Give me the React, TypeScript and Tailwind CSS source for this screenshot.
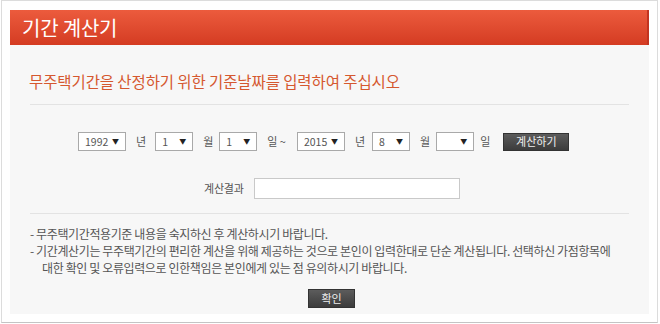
const font = { fontFamily: '"Noto Sans CJK KR", "Noto Sans", sans-serif' };

function FakeSelect({ value, w }: { value: string; w: string }) {
  return (
    <div
      className={`${w} h-[19px] bg-white border border-[#a9a9a9] flex items-center justify-between pl-[6px] pr-[6px] text-[10.5px] text-[#555]`}
    >
      <span>{value}</span>
      <span className="text-[7px] text-[#222]">▼</span>
    </div>
  );
}

export default function App() {
  return (
    <div className="w-[660px] h-[324px] bg-white" style={font}>
      <div className="ml-[1px] w-[657px] h-[323px] border border-[#dcdcdc] border-b-[#c4c4c4] pl-[8px] pt-[9px]">
        <div className="w-[639px] h-[35px] bg-gradient-to-b from-[#ec5b3d] to-[#d43b22] border-r-2 border-[#c23420] flex items-center pl-[12px]">
          <span className="text-[20px] tracking-[-0.2px] text-white leading-none">기간 계산기</span>
        </div>

        <div className="w-[639px] h-[269px] bg-[#f7f7f7] flex flex-col">
          <div className="mt-[27px] pl-[19px] h-[20px] flex items-center text-[15.5px] text-[#d5582f] tracking-[-0.1px]">
            무주택기간을 산정하기 위한 기준날짜를 입력하여 주십시오
          </div>
          <div className="mt-[12px] mx-[20px] border-t border-[#e3e3e3]" />

          <div className="mt-[27px] h-[19px] flex items-center pl-[68px] text-[11px] text-[#555]">
            <FakeSelect value="1992" w="w-[48px]" />
            <span className="ml-[10px]">년</span>
            <div className="ml-[9px]"><FakeSelect value="1" w="w-[38px]" /></div>
            <span className="ml-[10px]">월</span>
            <div className="ml-[6px]"><FakeSelect value="1" w="w-[38px]" /></div>
            <span className="ml-[10px]">일 ~</span>
            <div className="ml-[11px]"><FakeSelect value="2015" w="w-[48px]" /></div>
            <span className="ml-[10px]">년</span>
            <div className="ml-[7px]"><FakeSelect value="8" w="w-[38px]" /></div>
            <span className="ml-[10px]">월</span>
            <div className="ml-[6px]"><FakeSelect value="" w="w-[38px]" /></div>
            <span className="ml-[6px]">일</span>
            <button className="ml-[13px] w-[66px] h-[18px] bg-gradient-to-b from-[#5c5c5c] to-[#3c3c3c] border border-[#333] text-[11px] text-[#eee] leading-none">
              계산하기
            </button>
          </div>

          <div className="mt-[27px] h-[21px] flex items-center pl-[194px]">
            <span className="text-[11px] text-[#555] tracking-[-0.2px]">계산결과</span>
            <div className="ml-[10px] w-[206px] h-[21px] bg-white border border-[#c9c9c9]" />
          </div>

          <div className="mt-[14px] mx-[20px] border-t border-[#e3e3e3]" />

          <div className="mt-[11px] pl-[20px] pr-[10px] text-[12px] leading-[17px] text-[#555] tracking-[-0.38px] whitespace-nowrap">
            <p>- 무주택기간적용기준 내용을 숙지하신 후 계산하시기 바랍니다.</p>
            <p>- 기간계산기는 무주택기간의 편리한 계산을 위해 제공하는 것으로 본인이 입력한대로 단순 계산됩니다. 선택하신 가점항목에</p>
            <p className="pl-[12px]">대한 확인 및 오류입력으로 인한책임은 본인에게 있는 점 유의하시기 바랍니다.</p>
          </div>

          <div className="mt-[13px] flex justify-center pl-[4px]">
            <button className="w-[47px] h-[19px] bg-gradient-to-b from-[#5c5c5c] to-[#3c3c3c] border border-[#333] text-[11px] text-[#eee] leading-none">
              확인
            </button>
          </div>
        </div>
      </div>
    </div>
  );
}
